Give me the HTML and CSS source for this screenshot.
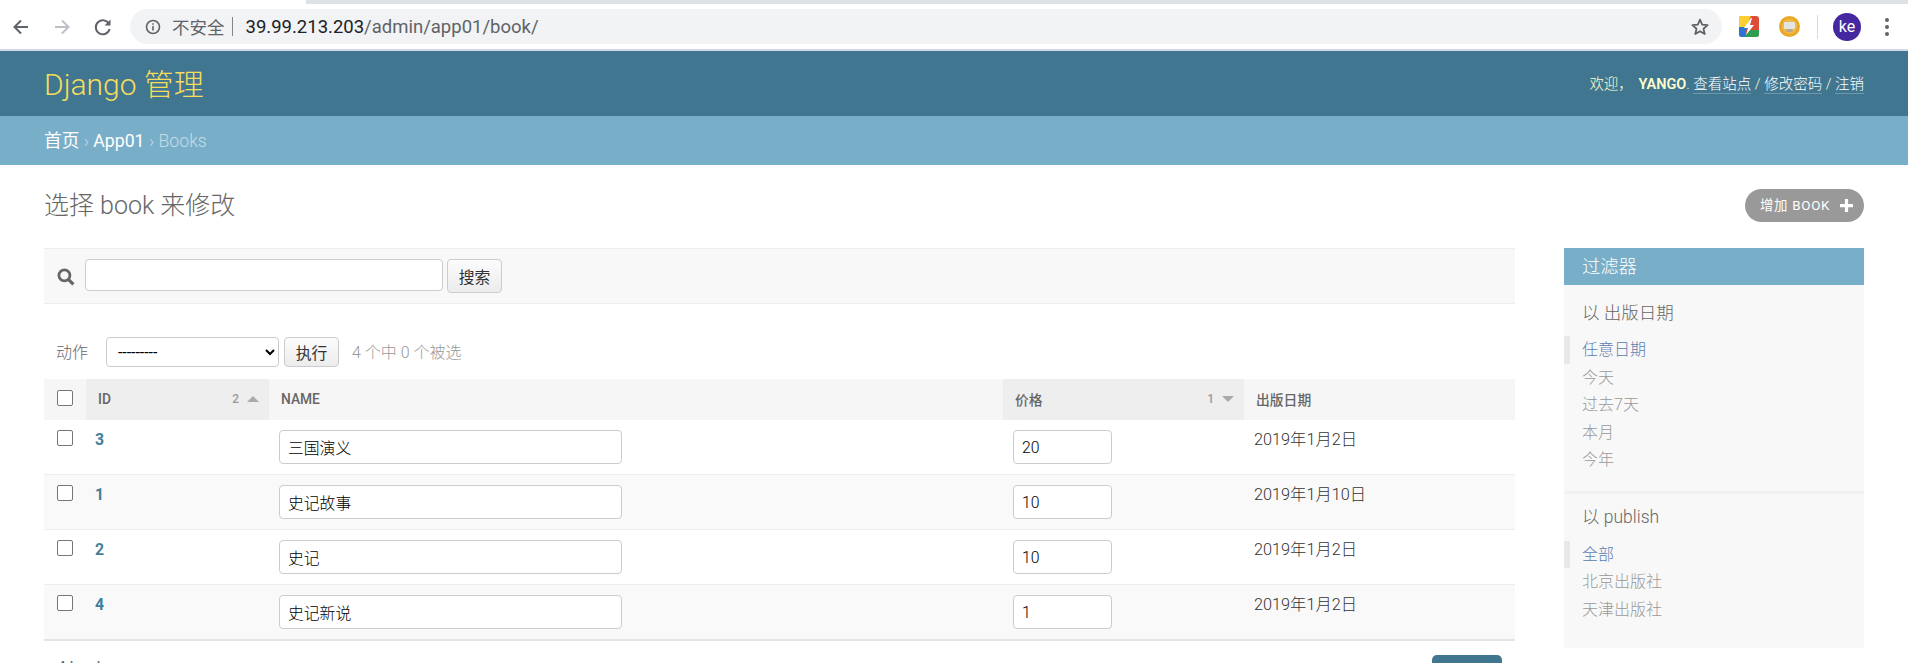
FILE: index.html
```html
<!DOCTYPE html>
<html lang="zh">
<head>
    <meta charset="UTF-8">
    <title>选择 book 来修改 | Django 站点管理员</title>
    <link rel="stylesheet" href="styles.css">
</head>
<body>
    <!-- Browser chrome -->
    <div class="tabstrip"><div class="tab-edge"></div></div>
    <div class="toolbar">
        <svg class="nav-icon" width="20" height="20" viewBox="0 0 20 20"><path d="M17 10H4M10 3.5 3.5 10l6.5 6.5" fill="none" stroke="#5f6368" stroke-width="2"/></svg>
        <svg class="nav-icon" width="20" height="20" viewBox="0 0 20 20"><path d="M3 10h13M10 3.5l6.5 6.5-6.5 6.5" fill="none" stroke="#bdc1c6" stroke-width="2"/></svg>
        <svg class="nav-icon" width="20" height="20" viewBox="0 0 20 20"><path d="M16 7a7 7 0 1 0 .6 5" fill="none" stroke="#5f6368" stroke-width="2"/><path d="M17.5 2.5v6h-6z" fill="#5f6368"/></svg>
        <div class="omnibox">
            <svg class="info-icon" width="16" height="16" viewBox="0 0 16 16"><circle cx="8" cy="8" r="6.5" fill="none" stroke="#5f6368" stroke-width="1.6"/><path d="M7.2 7h1.6v4.6H7.2zM7.2 4.2h1.6v1.6H7.2z" fill="#5f6368"/></svg>
            <span class="insecure">不安全</span>
            <span class="url-sep"></span>
            <span class="url"><span class="url-host">39.99.213.203</span>/admin/app01/book/</span>
            <svg class="star" width="20" height="20" viewBox="0 0 20 20"><path d="M10 2.6l2.2 5 5.4.5-4.1 3.6 1.2 5.3L10 14.2 5.3 17l1.2-5.3L2.4 8.100l5.4-.5z" fill="none" stroke="#5f6368" stroke-width="1.8" stroke-linejoin="round"/></svg>
        </div>
        <svg class="ext-one" width="20" height="21" viewBox="0 0 20 21">
            <rect width="20" height="21" rx="3" fill="#dd4b39"/>
            <path d="M0 3a3 3 0 0 1 3-3h9L7 11H0z" fill="#fbd030"/>
            <path d="M0 11h8l-2 10H3a3 3 0 0 1-3-3z" fill="#2d74d6"/>
            <path d="M6 21l3-7h11v4a3 3 0 0 1-3 3z" fill="#2f9e4f"/>
            <path d="M12 2 5 12h4l-2 7 8-10h-4l2-7z" fill="#fff"/>
        </svg>
        <svg class="ext-two" width="21" height="21" viewBox="0 0 21 21">
            <circle cx="10.500" cy="10.500" r="10.500" fill="#e9a825"/>
            <circle cx="10.500" cy="10.500" r="7.500" fill="#f0b94a"/>
            <rect x="5" y="6" width="11" height="7" rx="1" fill="#e4e4e4"/>
            <path d="M8 13h5l1 3H7z" fill="#b9a98a"/>
        </svg>
        <span class="tool-sep"></span>
        <span class="avatar">ke</span>
        <svg class="menu-dots" width="4" height="18" viewBox="0 0 4 18"><circle cx="2" cy="2" r="2" fill="#5f6368"/><circle cx="2" cy="9" r="2" fill="#5f6368"/><circle cx="2" cy="16" r="2" fill="#5f6368"/></svg>
    </div>

    <!-- Django admin -->
    <div id="header">
        <div class="branding">Django 管理</div>
        <div class="user-tools">
            欢迎， <strong>YANGO</strong>.
            <a href="#">查看站点</a> / <a href="#">修改密码</a> / <a href="#">注销</a>
        </div>
    </div>
    <div class="breadcrumbs">
        <a href="#">首页</a> › <a href="#">App01</a> › Books
    </div>

    <div class="content">
        <div class="title-row">
            <h1>选择 book 来修改</h1>
            <a class="addlink" href="#">增加 book
                <svg width="13" height="13" viewBox="0 0 12 12"><path d="M4.500 0h3v4.500H12v3H7.500V12h-3V7.500H0v-3h4.500z" fill="#fff"/></svg>
            </a>
        </div>

        <div class="columns">
            <div class="changelist">
                <div class="search-bar">
                    <svg class="search-icon" width="18" height="18" viewBox="0 0 17 17"><circle cx="7" cy="7" r="5.200" fill="none" stroke="#666" stroke-width="2.600"/><path d="M10.500 10.500 15.500 15.500" stroke="#666" stroke-width="3"/></svg>
                    <input class="search-input" type="text">
                    <button class="btn search-btn" type="button">搜索</button>
                </div>

                <div class="actions">
                    <label class="action-label">动作</label>
                    <select class="action-select"><option>---------</option></select>
                    <button class="btn go-btn" type="button">执行</button>
                    <span class="action-counter">4 个中 0 个被选</span>
                </div>

                <table class="results">
                    <colgroup>
                        <col class="col-check"><col class="col-id"><col class="col-name"><col class="col-price"><col>
                    </colgroup>
                    <thead>
                        <tr>
                            <th class="check-cell"><input class="check" type="checkbox"></th>
                            <th class="sorted"><div class="th-inner"><span>ID</span><span class="sort-num">2</span><span class="arrow-up"></span></div></th>
                            <th><div class="th-inner name-head"><span>Name</span></div></th>
                            <th class="sorted"><div class="th-inner"><span>价格</span><span class="sort-num">1</span><span class="arrow-down"></span></div></th>
                            <th><div class="th-inner"><span>出版日期</span></div></th>
                        </tr>
                    </thead>
                    <tbody>
                        <tr>
                            <td class="check-cell"><input class="check" type="checkbox"></td>
                            <td class="id-cell"><a href="#">3</a></td>
                            <td><input class="name-input" type="text" value="三国演义"></td>
                            <td><input class="price-input" type="text" value="20"></td>
                            <td class="date-cell">2019年1月2日</td>
                        </tr>
                        <tr>
                            <td class="check-cell"><input class="check" type="checkbox"></td>
                            <td class="id-cell"><a href="#">1</a></td>
                            <td><input class="name-input" type="text" value="史记故事"></td>
                            <td><input class="price-input" type="text" value="10"></td>
                            <td class="date-cell">2019年1月10日</td>
                        </tr>
                        <tr>
                            <td class="check-cell"><input class="check" type="checkbox"></td>
                            <td class="id-cell"><a href="#">2</a></td>
                            <td><input class="name-input" type="text" value="史记"></td>
                            <td><input class="price-input" type="text" value="10"></td>
                            <td class="date-cell">2019年1月2日</td>
                        </tr>
                        <tr>
                            <td class="check-cell"><input class="check" type="checkbox"></td>
                            <td class="id-cell"><a href="#">4</a></td>
                            <td><input class="name-input" type="text" value="史记新说"></td>
                            <td><input class="price-input" type="text" value="1"></td>
                            <td class="date-cell">2019年1月2日</td>
                        </tr>
                    </tbody>
                </table>

                <div class="paginator">
                    <span>4 book</span>
                    <button class="save-btn" type="button">保存</button>
                </div>
            </div>

            <div class="filter">
                <h2>过滤器</h2>
                <h3>以 出版日期</h3>
                <ul>
                    <li class="selected"><a href="#">任意日期</a></li>
                    <li><a href="#">今天</a></li>
                    <li><a href="#">过去7天</a></li>
                    <li><a href="#">本月</a></li>
                    <li><a href="#">今年</a></li>
                </ul>
                <h3 class="filter-next">以 publish</h3>
                <ul>
                    <li class="selected"><a href="#">全部</a></li>
                    <li><a href="#">北京出版社</a></li>
                    <li><a href="#">天津出版社</a></li>
                </ul>
            </div>
        </div>
    </div>
</body>
</html>
```

FILE: styles.css
```css
html, body {
    height: 663px;
    overflow: hidden;
}
body {
    margin: 0;
    background: #fff;
    color: #333;
    font-family: Roboto, "Noto Sans CJK SC", sans-serif;
    font-size: 16px;
}
a {
    text-decoration: none;
}

/* browser chrome */
.tabstrip {
    height: 4px;
    background: #dee1e6;
}
.tab-edge {
    width: 306px;
    height: 4px;
    background: #fff;
}
.toolbar {
    height: 47px;
    display: flex;
    align-items: center;
    background: #fff;
    border-bottom: 2px solid #d5d8e6;
    box-sizing: border-box;
    padding-left: 11px;
}
.nav-icon {
    margin-right: 21px;
    flex: none;
}
.omnibox {
    flex: 1 0 auto;
    height: 35px;
    display: flex;
    align-items: center;
    background: #f1f3f4;
    border-radius: 18px;
    margin-left: -4px;
    padding: 0 12px 0 15px;
    box-sizing: border-box;
    font-size: 18.500px;
}
.info-icon {
    margin-right: 11px;
}
.insecure {
    color: #5f6368;
    font-size: 17.500px;
}
.url-sep {
    width: 1px;
    height: 19px;
    background: #80868b;
    margin: 0 13px 0 7px;
}
.url {
    color: #5f6368;
}
.url-host {
    color: #202124;
}
.star {
    margin-left: auto;
}
.ext-one {
    margin-left: 17px;
    flex: none;
}
.ext-two {
    margin-left: 20px;
    flex: none;
}
.tool-sep {
    width: 1px;
    height: 24px;
    background: #dadce0;
    margin: 0 15px 0 17px;
}
.avatar {
    width: 28px;
    height: 28px;
    border-radius: 50%;
    background: #4527a0;
    color: #fff;
    font-size: 16px;
    line-height: 28px;
    text-align: center;
    flex: none;
}
.menu-dots {
    margin: 0 19px 0 24px;
    flex: none;
}

/* admin header */
#header {
    height: 65px;
    display: flex;
    align-items: center;
    justify-content: space-between;
    background: #417690;
    color: #ffc;
    padding: 0 44px;
}
.branding {
    color: #f5dd5d;
    font-size: 30px;
    font-weight: 300;
    padding-bottom: 4px;
}
.user-tools {
    font-size: 14.500px;
    font-weight: 300;
    padding-bottom: 2px;
}
.user-tools strong {
    font-weight: 600;
    margin-left: 2px;
}
.user-tools a {
    color: #fff;
    border-bottom: 1px solid rgba(255,255,255,0.25);
}
.breadcrumbs {
    height: 49px;
    line-height: 51px;
    background: #79aec8;
    color: #c4dce8;
    padding: 0 44px;
    font-size: 17.700px;
    font-weight: 300;
}
.breadcrumbs a {
    color: #fff;
    font-weight: 400;
}

/* page */
.content {
    padding: 0 44px;
}
.title-row {
    display: flex;
    align-items: center;
    justify-content: space-between;
    padding-top: 24px;
    margin-bottom: 26px;
}
h1 {
    margin: 0;
    color: #666;
    font-size: 25px;
    font-weight: 300;
    line-height: 32px;
    padding-top: 1px;
}
.addlink {
    width: 119px;
    height: 33px;
    box-sizing: border-box;
    display: flex;
    align-items: center;
    justify-content: space-between;
    padding: 0 11px 0 15px;
    background: #999;
    border-radius: 17px;
    color: #fff;
    font-size: 13.400px;
    line-height: 31px;
    text-transform: uppercase;
    letter-spacing: 0.7px;
}
.columns {
    display: flex;
    gap: 49px;
}
.changelist {
    flex: 1;
    min-width: 0;
}

/* toolbar */
.search-bar {
    height: 56px;
    box-sizing: border-box;
    display: flex;
    align-items: flex-start;
    background: #f8f8f8;
    border-top: 1px solid #eee;
    border-bottom: 1px solid #eee;
    padding: 10px 0 0 13px;
}
.search-icon {
    margin-top: 9px;
}
.search-input {
    width: 358px;
    height: 32px;
    box-sizing: border-box;
    margin-left: 10px;
    border: 1px solid #ccc;
    border-radius: 4px;
    background: #fff;
}
.btn {
    box-sizing: border-box;
    border: 1px solid #ccc;
    border-radius: 4px;
    background: linear-gradient(#fcfcfc, #ececec);
    color: #333;
    font-family: inherit;
    font-size: 15.800px;
    padding: 0;
}
.search-btn {
    width: 55px;
    height: 34px;
    margin-left: 4px;
}
.actions {
    height: 30px;
    display: flex;
    align-items: center;
    margin: 33px 0 12px;
    padding-left: 12px;
    font-size: 16px;
}
.action-label {
    width: 50px;
    color: #666;
    font-weight: 300;
    padding-bottom: 3px;
}
.action-select {
    width: 173px;
    height: 30px;
    box-sizing: border-box;
    border: 1px solid #ccc;
    border-radius: 4px;
    background: #fff;
    color: #000;
    font-family: inherit;
    font-size: 15.800px;
    padding-left: 7px;
}
.go-btn {
    width: 55px;
    height: 30px;
    margin-left: 5px;
}
.action-counter {
    margin-left: 13px;
    color: #999;
    font-weight: 300;
    padding-bottom: 2px;
}

/* results table */
.results {
    width: 100%;
    table-layout: fixed;
    border-collapse: collapse;
    border-bottom: 2px solid #e4e4e4;
}
.col-check { width: 42px; }
.col-id { width: 183px; }
.col-name { width: 734px; }
.col-price { width: 241px; }
.results th {
    height: 41px;
    padding: 0;
    background: #f6f6f6;
    color: #666;
    font-size: 13.800px;
    font-weight: 500;
    text-align: left;
    text-transform: uppercase;
}
.results th.sorted {
    background: #eee;
}
.th-inner {
    display: flex;
    align-items: center;
    padding: 0 10px 2px 12px;
}
.sort-num {
    margin-left: auto;
    color: #999;
    font-size: 12px;
    margin-right: 8px;
}
.arrow-up, .arrow-down {
    width: 0;
    height: 0;
    border-left: 6px solid transparent;
    border-right: 6px solid transparent;
}
.arrow-up {
    border-bottom: 6px solid #aaa;
}
.arrow-down {
    border-top: 6px solid #aaa;
}
.results td {
    padding: 10px 0;
    border-bottom: 1px solid #eee;
    vertical-align: top;
}
.results tbody tr:nth-child(even) {
    background: #f9f9f9;
}
.results tbody tr:last-child td {
    border-bottom: 0;
}
.results td.check-cell,
.results th.check-cell {
    padding-left: 13px;
}
.check {
    appearance: none;
    display: block;
    width: 16px;
    height: 16px;
    margin: 0;
    background: #fff;
    border: 1px solid #767676;
    border-radius: 2px;
    box-sizing: border-box;
}
.results th .check {
    margin-top: -4px;
}
.results td.id-cell {
    padding-left: 9px;
    padding-top: 11px;
    font-size: 15.800px;
    line-height: 18px;
}
.id-cell a {
    color: #447e9b;
    font-weight: 700;
}
.name-input, .price-input {
    display: block;
    height: 34px;
    box-sizing: border-box;
    border: 1px solid #ccc;
    border-radius: 4px;
    background: #fff;
    color: #000;
    font-family: inherit;
    font-size: 15.800px;
    font-weight: 300;
    padding: 1px 8px 0;
}
.name-input {
    width: 343px;
    margin-left: 10px;
}
.price-input {
    width: 99px;
    margin-left: 10px;
}
.results td.date-cell {
    padding-left: 10px;
    padding-top: 11px;
    font-size: 16.300px;
    font-weight: 300;
    line-height: 18px;
}

/* bottom row, mostly below the fold */
.paginator {
    display: flex;
    justify-content: space-between;
    align-items: flex-start;
    padding: 14px 13px 0;
    color: #666;
    font-size: 15.800px;
    line-height: 20px;
}
.paginator span {
    margin-top: 3px;
}
.save-btn {
    width: 70px;
    height: 40px;
    border: 0;
    border-radius: 5px;
    background: #417690;
    color: #fff;
}

/* filter sidebar */
.filter {
    width: 300px;
    height: 400px;
    flex: none;
    background: #f8f8f8;
}
.filter h2 {
    margin: 0;
    height: 37px;
    line-height: 37px;
    padding-left: 18px;
    background: #79aec8;
    color: #fff;
    font-size: 18.300px;
    font-weight: 300;
}
.filter h3 {
    margin: 0;
    padding: 16px 0 0 18px;
    color: #666;
    font-size: 17.500px;
    font-weight: 300;
    line-height: 24px;
}
.filter h3.filter-next {
    margin-top: 17px;
    border-top: 3px solid #f1f1f1;
    padding-top: 11px;
}
.filter ul {
    list-style: none;
    margin: 11px 0 0;
    padding: 0;
}
.filter-next + ul {
    margin-top: 12px;
}
.filter li {
    height: 27.500px;
    line-height: 27.500px;
    padding-left: 18px;
    font-size: 16px;
    font-weight: 300;
}
.filter li a {
    color: #999;
}
.filter li.selected {
    border-left: 6px solid #e8e8e8;
    padding-left: 12px;
}
.filter li.selected a {
    color: #5b80b2;
}
```
